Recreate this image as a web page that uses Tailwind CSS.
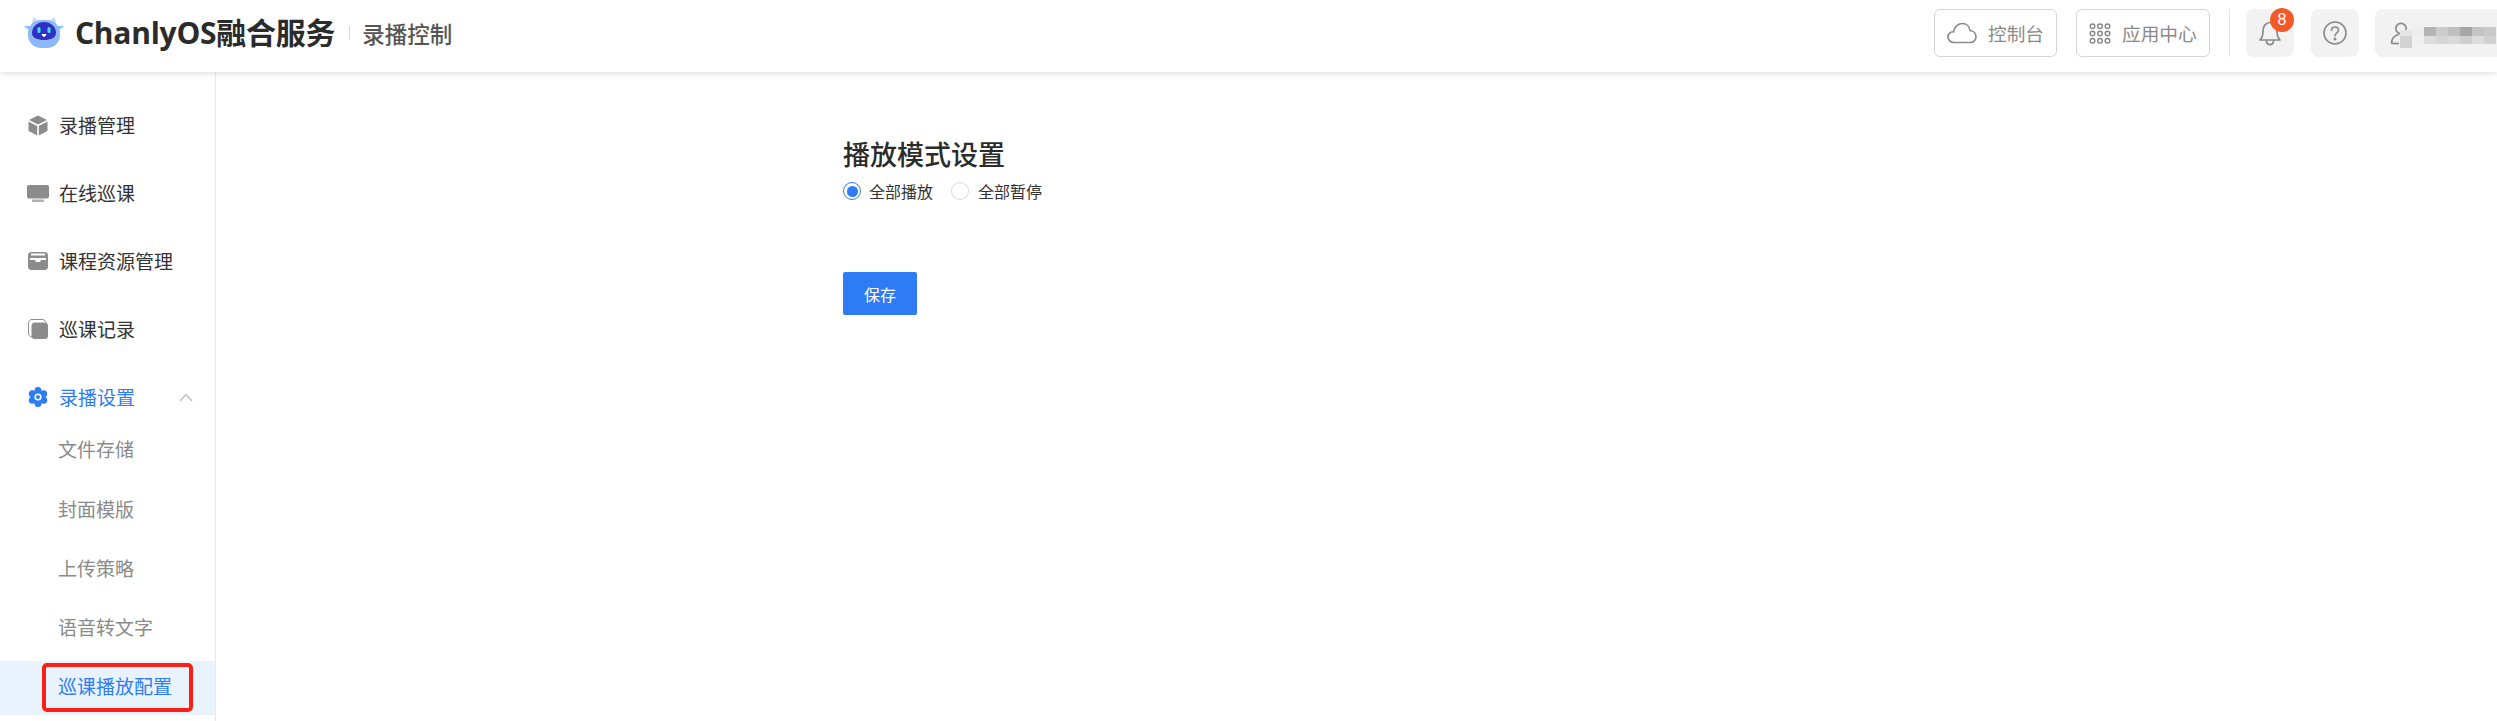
<!DOCTYPE html>
<html lang="zh-CN">
<head>
<meta charset="utf-8">
<title>录播控制</title>
<script src="https://cdn.jsdelivr.net/npm/@tailwindcss/browser@4"></script>
</head>
<body class="bg-white">
<div class="w-[2497px] h-[721px] overflow-hidden flex flex-col font-['Noto_Sans_CJK_SC','Noto_Sans',sans-serif] text-[#333]">
  <header class="relative z-10 h-[72px] shrink-0 flex items-center pb-[6px] bg-white shadow-[0_1px_7px_rgba(0,0,0,0.14)]">
    <svg class="ml-[24px] w-[40px] h-[34px]" viewBox="0 0 40 34">
      <path d="M8 8 L9 1 L16 6 Z M32 8 L31 1 L24 6 Z" fill="#c5dcfc"/>
      <path d="M0 10 Q4 9 8 11 L8 14 Q3 14 0 10 Z M40 10 Q36 9 32 11 L32 14 Q37 14 40 10 Z" fill="#8fc0fb"/>
      <rect x="4" y="4" width="32" height="28" rx="13" fill="#8db9fb"/>
      <path d="M20 6 C28 6 32 12 32 17 C32 22 26 24 20 24 C14 24 8 22 8 17 C8 12 12 6 20 6 Z" fill="#2f2fc4"/>
      <rect x="13.500" y="11" width="3" height="6" rx="1.500" fill="#3fe0f5"/>
      <rect x="23.500" y="11" width="3" height="6" rx="1.500" fill="#3fe0f5"/>
      <path d="M17.500 18 h5 q-1 3 -2.500 3 q-1.500 0 -2.500 -3 Z" fill="#fff"/>
    </svg>
    <div class="ml-[11px] text-[30px] leading-[40px] tracking-[-0.25px] font-bold text-[#2b2b2b] whitespace-nowrap font-['Open_Sans','Noto_Sans_CJK_SC',sans-serif]">ChanlyOS融合服务</div>
    <div class="ml-[14px] w-px h-[14px] bg-[#d9d9d9]"></div>
    <div class="ml-[12px] text-[22.5px] leading-[30px] font-medium text-[#555] whitespace-nowrap">录播控制</div>
    <div class="ml-auto flex items-center h-[48px] shrink-0">
      <button class="w-[123px] h-[48px] flex items-center border border-[#d4d4d4] rounded-[6px] pl-[12px] text-[18.67px] text-[#8a8a8a]">
        <svg class="w-[30px] h-[22px]" viewBox="0 0 30 22" fill="none" stroke="#8a8a8a" stroke-width="1.700"><path d="M7 20.500 C3.500 20.500 1 18 1 15 C1 12 3.500 9.500 6.500 9.800 C7.500 4.500 11.500 1.500 15.500 1.500 C19.500 1.500 22.500 4.500 23 8.500 C26.500 8.800 29 11.500 29 14.800 C29 18 26.500 20.500 23.500 20.500 Z"/></svg>
        <span class="ml-[11px]">控制台</span>
      </button>
      <button class="ml-[19px] w-[134px] h-[48px] flex items-center border border-[#d4d4d4] rounded-[6px] pl-[12px] text-[18.67px] text-[#8a8a8a]">
        <svg class="w-[22px] h-[21px]" viewBox="0 0 22 21" fill="none" stroke="#8a8a8a" stroke-width="1.500">
          <circle cx="3.500" cy="3.200" r="2.300"/><circle cx="11" cy="3.200" r="2.300"/><circle cx="18.500" cy="3.200" r="2.300"/>
          <circle cx="3.500" cy="10.500" r="2.300"/><circle cx="11" cy="10.500" r="2.300"/><circle cx="18.500" cy="10.500" r="2.300"/>
          <circle cx="3.500" cy="17.800" r="2.300"/><circle cx="11" cy="17.800" r="2.300"/><circle cx="18.500" cy="17.800" r="2.300"/>
        </svg>
        <span class="ml-[11px] whitespace-nowrap">应用中心</span>
      </button>
      <div class="ml-[19px] w-px h-[48px] bg-[#e3e3e3]"></div>
      <div class="relative ml-[16px] w-[48px] h-[48px] rounded-[8px] bg-[#f2f2f2] flex items-center justify-center">
        <svg class="w-[22px] h-[26px]" viewBox="0 0 22 26" fill="none" stroke="#8a8a8a" stroke-width="1.700" stroke-linejoin="round"><path d="M1 20 C3 18 4 16 4 11 C4 6 7 2.500 11 2.500 C15 2.500 18 6 18 11 C18 16 19 18 21 20 Z"/><path d="M7.500 20.500 C7.500 26 14.500 26 14.500 20.500"/></svg>
        <span class="absolute left-[24px] top-[-1px] w-[24px] h-[24px] rounded-full bg-[#f4592a] text-white text-[16px] leading-[24px] text-center font-['Liberation_Sans',sans-serif]">8</span>
      </div>
      <div class="ml-[17px] w-[48px] h-[48px] rounded-[8px] bg-[#f2f2f2] flex items-center justify-center">
        <svg class="w-[24px] h-[24px]" viewBox="0 0 24 24" fill="none" stroke="#8a8a8a" stroke-width="1.600"><circle cx="12" cy="12" r="11"/><path d="M8.500 9.500 C8.500 7.300 10 6 12 6 C14 6 15.500 7.300 15.500 9.200 C15.500 11.800 12 12 12 14.800" stroke-linecap="round"/><circle cx="12" cy="18" r="0.700" fill="#8a8a8a"/></svg>
      </div>
      <div class="relative ml-[16px] w-[122px] h-[48px] rounded-l-[8px] bg-[#f2f2f2]">
        <svg class="absolute left-[15px] top-[13px] w-[22px] h-[23px]" viewBox="0 0 22 23" fill="none" stroke="#8a8a8a" stroke-width="1.700"><circle cx="11" cy="6.500" r="5.200"/><path d="M1.500 21.500 C1.500 16.500 4.500 13.500 9 12.500"/><path d="M1.500 21.500 H9"/></svg>
        <div class="absolute left-[25px] top-[18px] flex">
          <div class="flex flex-col mt-[3px]">
            <i class="block w-[12px] h-[6px] bg-[#e4e4e4]"></i>
            <i class="block w-[12px] h-[12px] bg-[#d3d3d3]"></i>
          </div>
          <div class="flex flex-col">
            <div class="flex h-[9px]">
              <i class="w-[12px] bg-[#eeeeee]"></i><i class="w-[12px] bg-[#b4b4b4]"></i><i class="w-[12px] bg-[#cccccc]"></i><i class="w-[12px] bg-[#bfbfbf]"></i><i class="w-[12px] bg-[#a6a6a6]"></i><i class="w-[12px] bg-[#c4c4c4]"></i><i class="w-[12px] bg-[#c9c9c9]"></i>
            </div>
            <div class="flex h-[8px]">
              <i class="w-[12px] bg-[#f0f0f0]"></i><i class="w-[12px] bg-[#dddddd]"></i><i class="w-[12px] bg-[#d6d6d6]"></i><i class="w-[12px] bg-[#d9d9d9]"></i><i class="w-[12px] bg-[#cfcfcf]"></i><i class="w-[12px] bg-[#dddddd]"></i><i class="w-[12px] bg-[#d2d2d2]"></i>
            </div>
          </div>
        </div>
      </div>
    </div>
  </header>

  <div class="flex flex-1 min-h-0">
    <aside class="w-[216px] shrink-0 border-r border-[#e8e8e8] pt-[19px] text-[19px]">
      <div class="h-[68px] flex items-center pl-[28px]">
        <svg class="w-[20px] h-[21px]" viewBox="0 0 20 21" fill="#8c8c8c"><path d="M10 0.500 L19 5 L10 9.500 L1 5 Z"/><path d="M0.500 6.500 L9.200 11 V20.500 L0.500 16 Z"/><path d="M19.500 6.500 L10.800 11 V20.500 L19.500 16 Z"/></svg>
        <span class="ml-[11px]">录播管理</span>
      </div>
      <div class="h-[68px] flex items-center pl-[28px]">
        <svg class="w-[22px] h-[17px] -ml-[1px]" viewBox="0 0 22 17" fill="#8c8c8c"><rect x="0" y="0" width="22" height="13.500" rx="2"/><rect x="5" y="14.500" width="12" height="2.500" fill="#b0b0b0"/></svg>
        <span class="ml-[10px]">在线巡课</span>
      </div>
      <div class="h-[68px] flex items-center pl-[28px]">
        <svg class="w-[20px] h-[18px]" viewBox="0 0 20 18"><rect width="20" height="18" rx="3.500" fill="#8c8c8c"/><rect x="3" y="1.500" width="14" height="2" fill="#fff"/><path d="M2 6 H18 V8 H13 L12 10 H8 L7 8 H2 Z" fill="#fff"/></svg>
        <span class="ml-[11px]">课程资源管理</span>
      </div>
      <div class="h-[68px] flex items-center pl-[28px]">
        <svg class="w-[20px] h-[20px]" viewBox="0 0 20 20"><path d="M4 18 C1.500 17.500 0.500 16 0.500 14 V4 C0.500 2 2 0.500 4 0.500 H14 C16 0.500 17.500 1.500 18 3.500" fill="none" stroke="#8c8c8c" stroke-width="1"/><rect x="3.500" y="3.500" width="16.500" height="16.500" rx="3.500" fill="#8c8c8c"/></svg>
        <span class="ml-[11px]">巡课记录</span>
      </div>
      <div class="h-[68px] flex items-center pl-[28px] text-[#2d7cf6]">
        <svg class="w-[20px] h-[20px]" viewBox="0 0 20 20" fill="#2d7cf6"><circle cx="10" cy="3.500" r="3.500"/><circle cx="10" cy="16.500" r="3.500"/><circle cx="4.300" cy="6.700" r="3.500"/><circle cx="15.700" cy="6.700" r="3.500"/><circle cx="4.300" cy="13.300" r="3.500"/><circle cx="15.700" cy="13.300" r="3.500"/><circle cx="10" cy="10" r="6"/><circle cx="10" cy="10" r="3.600" fill="#fff"/><circle cx="10" cy="10" r="2"/></svg>
        <span class="ml-[11px]">录播设置</span>
        <svg class="ml-[44px] w-[14px] h-[9px]" viewBox="0 0 14 9" fill="none" stroke="#c0c0c0" stroke-width="1.500"><path d="M1 8 L7 1.500 L13 8"/></svg>
      </div>
      <div class="-mt-[7px] flex flex-col gap-[5.25px] text-[#8a8a8a]">
        <div class="h-[54px] flex items-center pl-[58px] pb-[4px]">文件存储</div>
        <div class="h-[54px] flex items-center pl-[58px] pb-[3px]">封面模版</div>
        <div class="h-[54px] flex items-center pl-[58px] pb-[3px]">上传策略</div>
        <div class="h-[54px] flex items-center pl-[58px] pb-[3px]">语音转文字</div>
        <div class="relative h-[54px] flex items-center pl-[58px] pb-[3px] bg-[#e9f3fe] text-[#2d7cf6]">
          巡课播放配置
          <div class="absolute left-[42px] top-[2px] w-[151px] h-[49px] border-[4.500px] border-[#fb1f16] rounded-[5px]"></div>
        </div>
      </div>
    </aside>

    <main class="flex-1 pl-[627px] pt-[64px]">
      <h1 class="text-[27px] leading-[36px] font-medium text-[#2b2b2b]">播放模式设置</h1>
      <div class="mt-[7px] h-[24px] flex items-center text-[16px]">
        <span class="w-[18px] h-[18px] rounded-full border border-[#2d7cf6] flex items-center justify-center"><span class="w-[11px] h-[11px] rounded-full bg-[#2d7cf6]"></span></span>
        <span class="ml-[8px]">全部播放</span>
        <span class="ml-[18px] w-[18px] h-[18px] rounded-full border border-[#d9d9d9]"></span>
        <span class="ml-[9px]">全部暂停</span>
      </div>
      <button class="mt-[69px] block w-[74px] h-[43px] bg-[#2d7cf6] rounded-[2px] text-white text-[16px]">保存</button>
    </main>
  </div>
</div>
</body>
</html>
